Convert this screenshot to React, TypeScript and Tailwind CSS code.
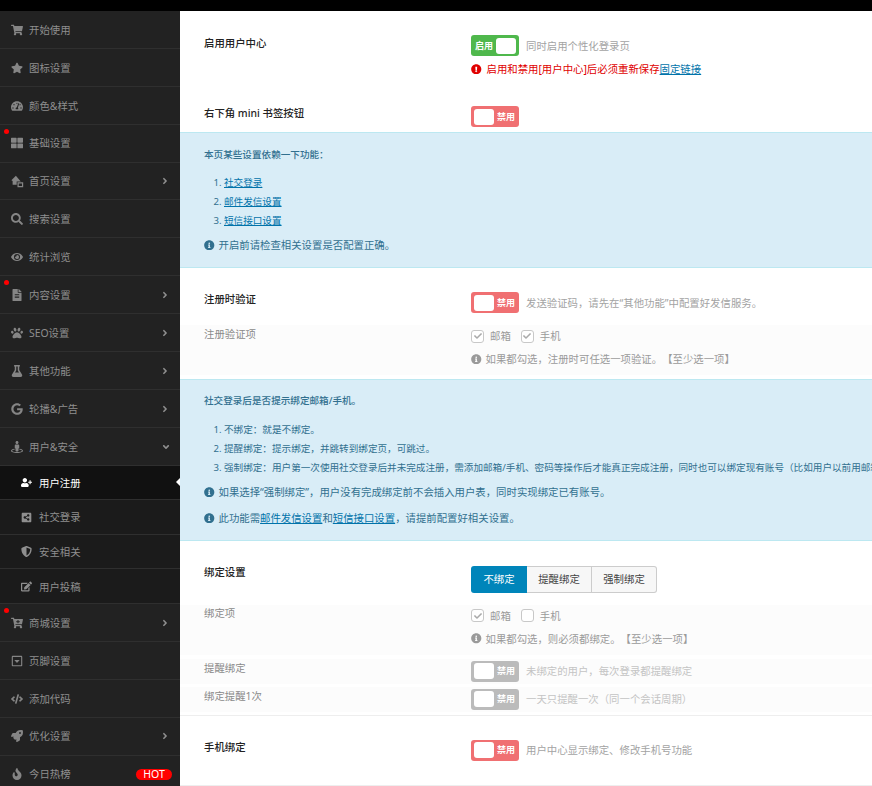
import React from "react";
import {
  FaShoppingCart, FaStar, FaTachometerAlt, FaThLarge, FaSearch, FaEye, FaFileAlt, FaPaw, FaFlask, FaGoogle,
  FaStreetView, FaUserPlus, FaShareAltSquare, FaShieldAlt, FaEdit, FaCartPlus, FaRegCaretSquareDown, FaCode,
  FaRocket, FaFire, FaAngleRight, FaAngleDown, FaInfoCircle, FaExclamationCircle, FaCheck,
} from "react-icons/fa";

const HomeIcon = () => (
  <svg viewBox="0 0 16 16" width="13" height="13" fill="currentColor">
    <path d="M6 1 L0.5 6.5 L2 7.5 V12 H7 V8 H12 L6 1Z" />
    <path d="M8 9h7v6H8z M9.5 10.5v3h4v-3z" fillRule="evenodd" />
  </svg>
);

type Item = { icon: React.ReactNode; label: string; arrow?: boolean; dot?: boolean; open?: boolean; hot?: boolean };

const items: Item[] = [
  { icon: <FaShoppingCart />, label: "开始使用" },
  { icon: <FaStar />, label: "图标设置" },
  { icon: <FaTachometerAlt />, label: "颜色&样式" },
  { icon: <FaThLarge />, label: "基础设置", dot: true },
  { icon: <HomeIcon />, label: "首页设置", arrow: true },
  { icon: <FaSearch />, label: "搜索设置" },
  { icon: <FaEye />, label: "统计浏览" },
  { icon: <FaFileAlt />, label: "内容设置", arrow: true, dot: true },
  { icon: <FaPaw />, label: "SEO设置", arrow: true },
  { icon: <FaFlask />, label: "其他功能", arrow: true },
  { icon: <FaGoogle />, label: "轮播&广告", arrow: true },
  { icon: <FaStreetView />, label: "用户&安全", open: true },
];
const subs = [
  { icon: <FaUserPlus />, label: "用户注册", active: true },
  { icon: <FaShareAltSquare />, label: "社交登录" },
  { icon: <FaShieldAlt />, label: "安全相关" },
  { icon: <FaEdit />, label: "用户投稿" },
];
const items2: Item[] = [
  { icon: <FaCartPlus />, label: "商城设置", arrow: true, dot: true },
  { icon: <FaRegCaretSquareDown />, label: "页脚设置" },
  { icon: <FaCode />, label: "添加代码" },
  { icon: <FaRocket />, label: "优化设置", arrow: true },
  { icon: <FaFire />, label: "今日热榜", hot: true },
];

function NavItem({ item }: { item: Item }) {
  return (
    <div className="relative flex h-[37.9px] shrink-0 items-center border-b border-[#2f2f2f] bg-[#222222] pl-[11px] pr-[7px] pt-[0.6px] text-[#8f8f8f]">
      {item.dot && <span className="absolute left-[4px] top-[4px] h-[5px] w-[5px] rounded-full bg-[#ff0000]" />}
      <span className="flex w-[18px] shrink-0 items-center text-[12px] text-[#858585]">{item.icon}</span>
      <span>{item.label}</span>
      {item.arrow && <FaAngleRight className="ml-auto mr-[3px] text-[10px]" />}
      {item.open && <FaAngleDown className="ml-auto mr-[2px] text-[10px]" />}
      {item.hot && (
        <span className="ml-auto mr-px flex h-[11px] w-[36px] items-center justify-center rounded-full bg-[#ff0000] text-[10.5px] leading-none text-white">
          HOT
        </span>
      )}
    </div>
  );
}

function Toggle({ on, gray }: { on?: boolean; gray?: boolean }) {
  const bg = gray ? "bg-[#bbbbbb]" : on ? "bg-[#4fb84c]" : "bg-[#f07072]";
  return (
    <span className={`flex h-[21px] w-[48px] shrink-0 items-center justify-between rounded-[3px] px-[3px] text-[9px] text-white ${bg}`}>
      {on ? (
        <>
          <span className="pl-px font-bold">启用</span>
          <span className="h-[16px] w-[20px] rounded-[3px] bg-white" />
        </>
      ) : (
        <>
          <span className="h-[16px] w-[20px] rounded-[3px] bg-white" />
          <span className="pr-px font-bold">禁用</span>
        </>
      )}
    </span>
  );
}

function ToggleLine({ on, gray, desc }: { on?: boolean; gray?: boolean; desc: string }) {
  return (
    <div className="flex items-center gap-[7px]">
      <Toggle on={on} gray={gray} />
      <span className={gray ? "text-[#c4c4c4]" : "text-[#a3a3a3]"}>{desc}</span>
    </div>
  );
}

function Check({ checked, label }: { checked?: boolean; label: string }) {
  return (
    <span className="flex items-center gap-[6px] text-[#9a9a9a]">
      <span className="flex h-[13px] w-[13px] items-center justify-center rounded-[3px] border border-[#c8c8c8] bg-white text-[8px] text-[#aaaaaa]">
        {checked && <FaCheck />}
      </span>
      {label}
    </span>
  );
}

function Label({ sub, lift = "", children }: { sub?: boolean; lift?: string; children: React.ReactNode }) {
  return (
    <div className={`w-[267px] shrink-0 leading-4 ${lift} ${sub ? "text-[#8a8a8a]" : "font-medium text-[#222222]"}`}>{children}</div>
  );
}

const Link = ({ children }: { children: React.ReactNode }) => <a className="text-[#0073aa] underline">{children}</a>;

function Help({ children }: { children: React.ReactNode }) {
  return (
    <div className="flex h-4 items-center gap-[4px] whitespace-nowrap">
      <FaInfoCircle className="shrink-0 text-[10.5px]" />
      <span>{children}</span>
    </div>
  );
}

export default function App() {
  return (
    <div
      className="flex h-[786px] w-full flex-col overflow-hidden bg-white text-[10.4px] leading-4 [text-spacing-trim:space-all]"
      style={{ fontFamily: '"Noto Sans", "Noto Sans CJK SC", sans-serif' }}
    >
      <div className="h-[11px] shrink-0 bg-black" />
      <div className="flex min-h-0 flex-1">
        <aside className="flex w-[180px] shrink-0 flex-col overflow-hidden bg-[#222222]">
          {items.map((it) => (
            <NavItem key={it.label} item={it} />
          ))}
          {subs.map((s) => (
            <div
              key={s.label}
              className={`relative flex h-[34.6px] shrink-0 items-center border-b border-[#2f2f2f] pl-[21px] pt-[0.6px] ${
                s.active ? "bg-[#111111] text-white" : "bg-[#1b1b1b] text-[#8f8f8f]"
              }`}
            >
              <span className="flex w-[18px] shrink-0 items-center text-[11px]">{s.icon}</span>
              <span>{s.label}</span>
              {s.active && (
                <span className="absolute right-0 top-1/2 h-0 w-0 -translate-y-1/2 border-y-[4px] border-r-[4px] border-y-transparent border-r-white" />
              )}
            </div>
          ))}
          {items2.map((it) => (
            <NavItem key={it.label} item={it} />
          ))}
        </aside>

        <main className="min-w-0 flex-1 overflow-hidden">
          <div className="flex pl-6 pt-6">
            <Label>启用用户中心</Label>
            <div>
              <ToggleLine on desc="同时启用个性化登录页" />
              <div className="mt-[5px] flex h-4 items-center gap-[5px] text-[#e00000]">
                <FaExclamationCircle className="text-[10.5px]" />
                <span>
                  启用和禁用[用户中心]后必须重新保存<Link>固定链接</Link>
                </span>
              </div>
            </div>
          </div>
          <div className="flex pb-[5px] pl-6 pt-[29px]">
            <Label lift="-mt-px">右下角 mini 书签按钮</Label>
            <Toggle />
          </div>

          <div className="border-y border-[#bce8f1] bg-[#d9edf7] pb-[14px] pl-6 pt-[14px] text-[#31708f]">
            <div className="text-[9.6px] font-medium">本页某些设置依赖一下功能：</div>
            <ol className="mt-[9.5px] list-decimal pl-[20px] text-[9.6px] leading-[19px]">
              <li><Link>社交登录</Link></li>
              <li><Link>邮件发信设置</Link></li>
              <li><Link>短信接口设置</Link></li>
            </ol>
            <div className="mt-[7.5px]">
              <Help>开启前请检查相关设置是否配置正确。</Help>
            </div>
          </div>

          <div className="flex pb-3 pl-6 pt-6">
            <Label lift="-mt-px">注册时验证</Label>
            <ToggleLine desc="发送验证码，请先在“其他功能”中配置好发信服务。" />
          </div>
          <div className="flex h-[50px] bg-[#fcfcfc] pl-6 pt-[2px]">
            <Label sub lift="-mt-px">注册验证项</Label>
            <div className="text-[#9a9a9a]">
              <div className="flex h-[18px] items-center gap-[10px]">
                <Check checked label="邮箱" />
                <Check checked label="手机" />
              </div>
              <div className="mt-[6px]">
                <Help>如果都勾选，注册时可任选一项验证。【至少选一项】</Help>
              </div>
            </div>
          </div>

          <div className="mt-1 border-y border-[#bce8f1] bg-[#d9edf7] pb-[14px] pl-6 pt-[13px] text-[#31708f]">
            <div className="text-[9.6px] font-medium">社交登录后是否提示绑定邮箱/手机。</div>
            <ol className="mt-[10.5px] list-decimal whitespace-nowrap pl-[20px] text-[9.6px] leading-[19px]">
              <li>不绑定：就是不绑定。</li>
              <li>提醒绑定：提示绑定，并跳转到绑定页，可跳过。</li>
              <li>强制绑定：用户第一次使用社交登录后并未完成注册，需添加邮箱/手机、密码等操作后才能真正完成注册，同时也可以绑定现有账号（比如用户以前用邮箱注册的账号）</li>
            </ol>
            <div className="mt-[7.5px]">
              <Help>如果选择“强制绑定”，用户没有完成绑定前不会插入用户表，同时实现绑定已有账号。</Help>
            </div>
            <div className="mt-[10px]">
              <Help>
                此功能需<Link>邮件发信设置</Link>和<Link>短信接口设置</Link>，请提前配置好相关设置。
              </Help>
            </div>
          </div>

          <div className="flex pb-3 pl-6 pt-[24.5px]">
            <Label lift="-mt-[2px]">绑定设置</Label>
            <div className="flex h-[27px] items-stretch text-[#444444]">
              <span className="flex w-[56px] items-center justify-center rounded-l-[3px] bg-[#0085ba] text-white">不绑定</span>
              <span className="flex w-[65px] items-center justify-center border border-l-0 border-[#cccccc] bg-[#f7f7f7]">提醒绑定</span>
              <span className="flex w-[65px] items-center justify-center rounded-r-[3px] border border-l-0 border-[#cccccc] bg-[#f7f7f7]">强制绑定</span>
            </div>
          </div>
          <div className="flex h-[50px] bg-[#fcfcfc] pl-6 pt-[2px]">
            <Label sub lift="-mt-[2px]">绑定项</Label>
            <div className="text-[#9a9a9a]">
              <div className="flex h-[18px] items-center gap-[10px]">
                <Check checked label="邮箱" />
                <Check label="手机" />
              </div>
              <div className="mt-[6px]">
                <Help>如果都勾选，则必须都绑定。【至少选一项】</Help>
              </div>
            </div>
          </div>
          <div className="mt-1 flex h-[25px] bg-[#fcfcfc] pl-6 py-[2px]">
            <Label sub lift="-mt-px">提醒绑定</Label>
            <ToggleLine gray desc="未绑定的用户，每次登录都提醒绑定" />
          </div>
          <div className="mt-[3px] flex h-[25px] bg-[#fcfcfc] pl-6 py-[2px]">
            <Label sub lift="-mt-px">绑定提醒1次</Label>
            <ToggleLine gray desc="一天只提醒一次（同一个会话周期）" />
          </div>
          <div className="mt-[3px] flex border-y border-[#eeeeee] py-6 pl-6">
            <Label lift="-mt-px">手机绑定</Label>
            <ToggleLine desc="用户中心显示绑定、修改手机号功能" />
          </div>
        </main>
      </div>
    </div>
  );
}
